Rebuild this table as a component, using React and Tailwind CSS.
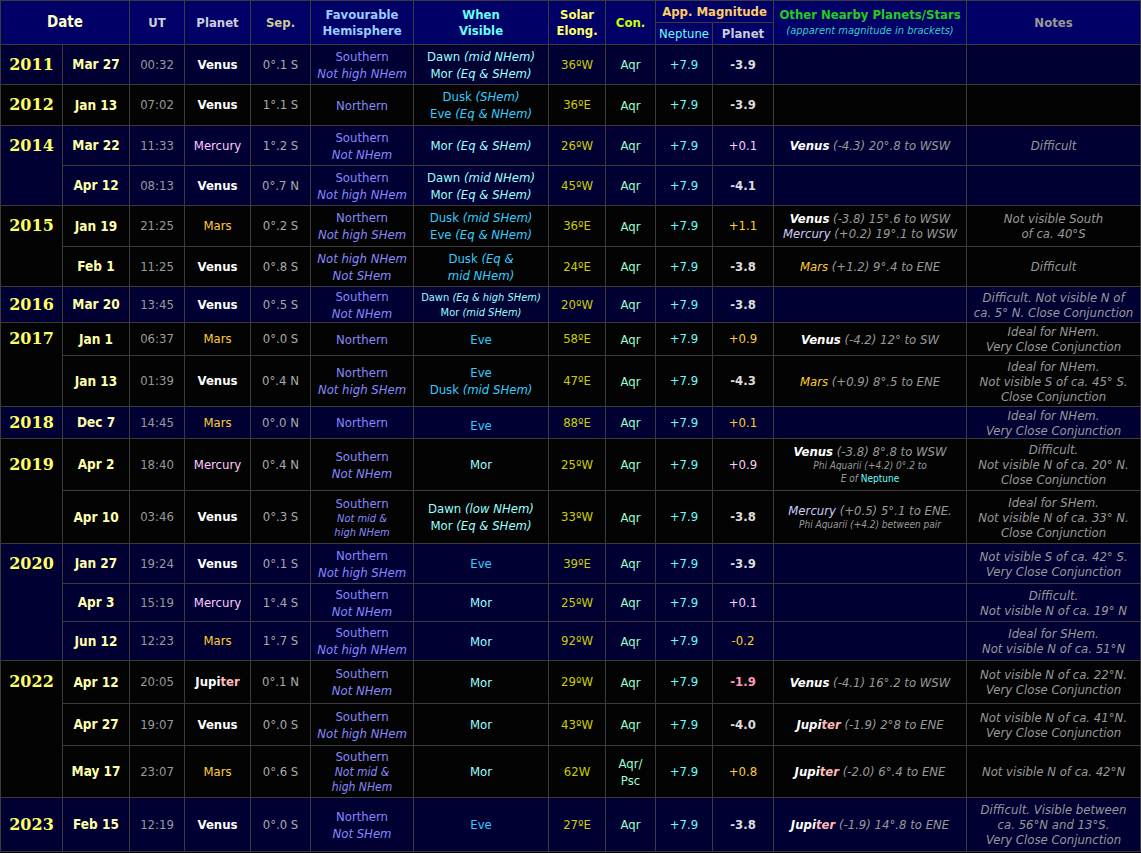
import React from "react";

const F = "font-['DejaVu_Sans_Condensed','Liberation_Sans',sans-serif]";
const C = "border border-[#3b3b3b] text-center align-middle p-0 whitespace-nowrap";
const NAVY = "bg-[#000033]";
const BLACK = "bg-[#030303]";

const PV = () => <span className="font-bold text-white">Venus</span>;
const PM = () => <span className="text-[#ffccff]">Mercury</span>;
const PMa = () => <span className="text-[#ffcc33]">Mars</span>;
const PJ = () => (
  <span className="font-bold text-white">
    Jupi<span className="text-[#ffbbbb]">ter</span>
  </span>
);

const OV = () => <span className="font-bold text-white">Venus</span>;
const OM = () => <span className="text-[#ccccff]">Mercury</span>;
const OMa = () => <span className="text-[#ffcc33]">Mars</span>;
const OJ = () => (
  <span className="font-bold text-white">
    Jupi<span className="text-[#ffbbbb]">ter</span>
  </span>
);

function Hem({ a, b, c, small, mid }) {
  const sub = small ? "text-[11px] leading-[14px]" : mid ? "text-[12px] leading-[15px]" : "";
  return (
    <div className="text-[#8888ff] leading-[17px]">
      {a && <div>{a}</div>}
      {b && <div className={"italic " + sub}>{b}</div>}
      {c && <div className={"italic " + sub}>{c}</div>}
    </div>
  );
}

const Mor = ({ p }) => (
  <div className="text-[#99ffff]">
    Mor{p && <i> ({p})</i>}
  </div>
);
const Dawn = ({ p }) => (
  <div className="text-[#99ffff]">
    Dawn{p && <i> ({p})</i>}
  </div>
);
const Dusk = ({ p }) => (
  <div className="text-[#33ccff]">
    Dusk{p && <i> ({p})</i>}
  </div>
);
const Eve = ({ p }) => (
  <div className="text-[#33ccff]">
    Eve{p && <i> ({p})</i>}
  </div>
);

const MagV = ({ v }) => <span className="font-bold text-[#dddddd]">{v}</span>;
const MagM = ({ v }) => <span className="text-[#ffccff]">{v}</span>;
const MagMa = ({ v }) => <span className="text-[#ffcc33]">{v}</span>;
const MagJ = ({ v }) => <span className="font-bold text-[#ff99bb]">{v}</span>;

function Other({ children }) {
  return <div className="italic text-[#999999] leading-[15px]">{children}</div>;
}
function Notes({ lines }) {
  return (
    <div className="italic text-[#999999] leading-[15px]">
      {lines.map((l, i) => (
        <div key={i}>{l}</div>
      ))}
    </div>
  );
}

function Row({ h, bg, year, yearSpan, yearH, date, ut, planet, sep, hemi, vis, elong, con, mag, other, notes }) {
  return (
    <tr className={h + " " + bg}>
      {year && (
        <td rowSpan={yearSpan || 1} className={C + " align-top"}>
          <div className={yearH + " flex items-center justify-center font-['DejaVu_Serif',serif] font-bold text-[16px] text-[#ffff66]"}>
            {year}
          </div>
        </td>
      )}
      <td className={C + " font-bold text-[#ffffaa] text-[13.5px]"}>{date}</td>
      <td className={C + " text-[#999999]"}>{ut}</td>
      <td className={C}>{planet}</td>
      <td className={C + " text-[#aaaaaa]"}>{sep}</td>
      <td className={C}>{hemi}</td>
      <td className={C + " leading-[17px]"}>{vis}</td>
      <td className={C + " text-[#cccc00]"}>{elong}</td>
      <td className={C + " text-[#99ffcc] leading-[17px]"}>{con}</td>
      <td className={C + " text-[#66ffff]"}>+7.9</td>
      <td className={C}>{mag}</td>
      <td className={C}>{other}</td>
      <td className={C}>{notes}</td>
    </tr>
  );
}

export default function App() {
  return (
    <div className={"bg-black w-[1141px] h-[853px] overflow-hidden " + F + " text-[13px]"}>
      <table className="table-fixed border-collapse w-[1140px]">
        <colgroup>
          <col className="w-[62px]" />
          <col className="w-[67px]" />
          <col className="w-[55px]" />
          <col className="w-[66px]" />
          <col className="w-[60px]" />
          <col className="w-[103px]" />
          <col className="w-[135px]" />
          <col className="w-[57px]" />
          <col className="w-[50px]" />
          <col className="w-[57px]" />
          <col className="w-[61px]" />
          <col className="w-[193px]" />
          <col className="w-[174px]" />
        </colgroup>
        <thead>
          <tr className="h-[22px] bg-[#000066]">
            <th colSpan={2} rowSpan={2} className={C + " font-bold text-[15px] text-[#ffffcc]"}>Date</th>
            <th rowSpan={2} className={C + " font-bold text-[#ccccdd]"}>UT</th>
            <th rowSpan={2} className={C + " font-bold text-[#ccccdd]"}>Planet</th>
            <th rowSpan={2} className={C + " font-bold text-[#cccc99]"}>Sep.</th>
            <th rowSpan={2} className={C + " font-bold text-[#99ccff] leading-[16px]"}>
              Favourable
              <br />
              Hemisphere
            </th>
            <th rowSpan={2} className={C + " font-bold text-[#66ffff] leading-[16px]"}>
              When
              <br />
              Visible
            </th>
            <th rowSpan={2} className={C + " font-bold text-[#ffff66] leading-[16px]"}>
              Solar
              <br />
              Elong.
            </th>
            <th rowSpan={2} className={C + " font-bold text-[#ccff00]"}>Con.</th>
            <th colSpan={2} className={C + " font-bold text-[#ffcc66]"}>App. Magnitude</th>
            <th rowSpan={2} className={C + " leading-[16px]"}>
              <div className="font-bold text-[#22cc22]">Other Nearby Planets/Stars</div>
              <div className="italic font-normal text-[11px] text-[#33cccc]">(apparent magnitude in brackets)</div>
            </th>
            <th rowSpan={2} className={C + " font-bold text-[#999999]"}>Notes</th>
          </tr>
          <tr className="h-[22px] bg-[#000066]">
            <th className={C + " font-normal text-[#66ffff]"}>Neptune</th>
            <th className={C + " font-bold text-[#ccccdd]"}>Planet</th>
          </tr>
        </thead>
        <tbody>
          <Row h="h-[40px]" bg={NAVY} year="2011" yearH="h-[39px]" date="Mar 27" ut="00:32" planet={<PV />} sep="0°.1 S"
            hemi={<Hem a="Southern" b="Not high NHem" />}
            vis={<><Dawn p="mid NHem" /><Mor p="Eq & SHem" /></>}
            elong="36ºW" con="Aqr" mag={<MagV v="-3.9" />} />
          <Row h="h-[41px]" bg={BLACK} year="2012" yearH="h-[40px]" date="Jan 13" ut="07:02" planet={<PV />} sep="1°.1 S"
            hemi={<Hem a="Northern" />}
            vis={<><Dusk p="SHem" /><Eve p="Eq & NHem" /></>}
            elong="36ºE" con="Aqr" mag={<MagV v="-3.9" />} />
          <Row h="h-[40px]" bg={NAVY} year="2014" yearSpan={2} yearH="h-[39px]" date="Mar 22" ut="11:33" planet={<PM />} sep="1°.2 S"
            hemi={<Hem a="Southern" b="Not NHem" />}
            vis={<Mor p="Eq & SHem" />}
            elong="26ºW" con="Aqr" mag={<MagM v="+0.1" />}
            other={<Other><OV /> (-4.3) 20°.8 to WSW</Other>}
            notes={<Notes lines={["Difficult"]} />} />
          <Row h="h-[40px]" bg={NAVY} date="Apr 12" ut="08:13" planet={<PV />} sep="0°.7 N"
            hemi={<Hem a="Southern" b="Not high NHem" />}
            vis={<><Dawn p="mid NHem" /><Mor p="Eq & SHem" /></>}
            elong="45ºW" con="Aqr" mag={<MagV v="-4.1" />} />
          <Row h="h-[41px]" bg={BLACK} year="2015" yearSpan={2} yearH="h-[40px]" date="Jan 19" ut="21:25" planet={<PMa />} sep="0°.2 S"
            hemi={<Hem a="Northern" b="Not high SHem" />}
            vis={<><Dusk p="mid SHem" /><Eve p="Eq & NHem" /></>}
            elong="36ºE" con="Aqr" mag={<MagMa v="+1.1" />}
            other={<Other><div><OV /> (-3.8) 15°.6 to WSW</div><div><OM /> (+0.2) 19°.1 to WSW</div></Other>}
            notes={<Notes lines={["Not visible South", "of ca. 40°S"]} />} />
          <Row h="h-[40px]" bg={BLACK} date="Feb 1" ut="11:25" planet={<PV />} sep="0°.8 S"
            hemi={<Hem b="Not high NHem" c="Not SHem" />}
            vis={<div className="text-[#33ccff]"><div>Dusk <i>(Eq &amp;</i></div><div><i>mid NHem)</i></div></div>}
            elong="24ºE" con="Aqr" mag={<MagV v="-3.8" />}
            other={<Other><OMa /> (+1.2) 9°.4 to ENE</Other>}
            notes={<Notes lines={["Difficult"]} />} />
          <Row h="h-[36px]" bg={NAVY} year="2016" yearH="h-[35px]" date="Mar 20" ut="13:45" planet={<PV />} sep="0°.5 S"
            hemi={<Hem a="Southern" b="Not NHem" />}
            vis={<div className="text-[11px] leading-[15px]"><Dawn p="Eq & high SHem" /><Mor p="mid SHem" /></div>}
            elong="20ºW" con="Aqr" mag={<MagV v="-3.8" />}
            notes={<Notes lines={["Difficult. Not visible N of", "ca. 5° N. Close Conjunction"]} />} />
          <Row h="h-[33px]" bg={BLACK} year="2017" yearSpan={2} yearH="h-[32px]" date="Jan 1" ut="06:37" planet={<PMa />} sep="0°.0 S"
            hemi={<Hem a="Northern" />}
            vis={<Eve />}
            elong="58ºE" con="Aqr" mag={<MagMa v="+0.9" />}
            other={<Other><OV /> (-4.2) 12° to SW</Other>}
            notes={<Notes lines={["Ideal for NHem.", "Very Close Conjunction"]} />} />
          <Row h="h-[51px]" bg={BLACK} date="Jan 13" ut="01:39" planet={<PV />} sep="0°.4 N"
            hemi={<Hem a="Northern" b="Not high SHem" />}
            vis={<><Eve /><Dusk p="mid SHem" /></>}
            elong="47ºE" con="Aqr" mag={<MagV v="-4.3" />}
            other={<Other><OMa /> (+0.9) 8°.5 to ENE</Other>}
            notes={<Notes lines={["Ideal for NHem.", "Not visible S of ca. 45° S.", "Close Conjunction"]} />} />
          <Row h="h-[32px]" bg={NAVY} year="2018" yearH="h-[31px]" date="Dec 7" ut="14:45" planet={<PMa />} sep="0°.0 N"
            hemi={<Hem a="Northern" />}
            vis={<div className="pt-[6px]"><Eve /></div>}
            elong="88ºE" con="Aqr" mag={<MagMa v="+0.1" />}
            notes={<Notes lines={["Ideal for NHem.", "Very Close Conjunction"]} />} />
          <Row h="h-[52px]" bg={BLACK} year="2019" yearSpan={2} yearH="h-[51px]" date="Apr 2" ut="18:40" planet={<PM />} sep="0°.4 N"
            hemi={<Hem a="Southern" b="Not NHem" />}
            vis={<Mor />}
            elong="25ºW" con="Aqr" mag={<MagM v="+0.9" />}
            other={<Other><div><OV /> (-3.8) 8°.8 to WSW</div><div className="text-[10px] leading-[13px]">Phi Aquarii (+4.2) 0°.2 to</div><div className="text-[10px] leading-[13px]">E of <span className="not-italic text-[#66ffff]">Neptune</span></div></Other>}
            notes={<Notes lines={["Difficult.", "Not visible N of ca. 20° N.", "Close Conjunction"]} />} />
          <Row h="h-[53px]" bg={BLACK} date="Apr 10" ut="03:46" planet={<PV />} sep="0°.3 S"
            hemi={<Hem a="Southern" b="Not mid &" c="high NHem" small />}
            vis={<><Dawn p="low NHem" /><Mor p="Eq & SHem" /></>}
            elong="33ºW" con="Aqr" mag={<MagV v="-3.8" />}
            other={<Other><div><OM /> (+0.5) 5°.1 to ENE.</div><div className="text-[10px] leading-[14px]">Phi Aquarii (+4.2) between pair</div></Other>}
            notes={<Notes lines={["Ideal for SHem.", "Not visible N of ca. 33° N.", "Close Conjunction"]} />} />
          <Row h="h-[40px]" bg={NAVY} year="2020" yearSpan={3} yearH="h-[39px]" date="Jan 27" ut="19:24" planet={<PV />} sep="0°.1 S"
            hemi={<Hem a="Northern" b="Not high SHem" />}
            vis={<Eve />}
            elong="39ºE" con="Aqr" mag={<MagV v="-3.9" />}
            notes={<Notes lines={["Not visible S of ca. 42° S.", "Very Close Conjunction"]} />} />
          <Row h="h-[38px]" bg={NAVY} date="Apr 3" ut="15:19" planet={<PM />} sep="1°.4 S"
            hemi={<Hem a="Southern" b="Not NHem" />}
            vis={<Mor />}
            elong="25ºW" con="Aqr" mag={<MagM v="+0.1" />}
            notes={<Notes lines={["Difficult.", "Not visible N of ca. 19° N"]} />} />
          <Row h="h-[39px]" bg={NAVY} date="Jun 12" ut="12:23" planet={<PMa />} sep="1°.7 S"
            hemi={<Hem a="Southern" b="Not high NHem" />}
            vis={<Mor />}
            elong="92ºW" con="Aqr" mag={<MagMa v="-0.2" />}
            notes={<Notes lines={["Ideal for SHem.", "Not visible N of ca. 51°N"]} />} />
          <Row h="h-[43px]" bg={BLACK} year="2022" yearSpan={3} yearH="h-[42px]" date="Apr 12" ut="20:05" planet={<PJ />} sep="0°.1 N"
            hemi={<Hem a="Southern" b="Not NHem" />}
            vis={<Mor />}
            elong="29ºW" con="Aqr" mag={<MagJ v="-1.9" />}
            other={<Other><OV /> (-4.1) 16°.2 to WSW</Other>}
            notes={<Notes lines={["Not visible N of ca. 22°N.", "Very Close Conjunction"]} />} />
          <Row h="h-[42px]" bg={BLACK} date="Apr 27" ut="19:07" planet={<PV />} sep="0°.0 S"
            hemi={<Hem a="Southern" b="Not high NHem" />}
            vis={<Mor />}
            elong="43ºW" con="Aqr" mag={<MagV v="-4.0" />}
            other={<Other><OJ /> (-1.9) 2°8 to ENE</Other>}
            notes={<Notes lines={["Not visible N of ca. 41°N.", "Very Close Conjunction"]} />} />
          <Row h="h-[52px]" bg={BLACK} date="May 17" ut="23:07" planet={<PMa />} sep="0°.6 S"
            hemi={<Hem a="Southern" b="Not mid &" c="high NHem" mid />}
            vis={<Mor />}
            elong="62W" con={<><div>Aqr/</div><div>Psc</div></>} mag={<MagMa v="+0.8" />}
            other={<Other><OJ /> (-2.0) 6°.4 to ENE</Other>}
            notes={<Notes lines={["Not visible N of ca. 42°N"]} />} />
          <Row h="h-[54px]" bg={NAVY} year="2023" yearH="h-[53px]" date="Feb 15" ut="12:19" planet={<PV />} sep="0°.0 S"
            hemi={<Hem a="Northern" b="Not SHem" />}
            vis={<Eve />}
            elong="27ºE" con="Aqr" mag={<MagV v="-3.8" />}
            other={<Other><OJ /> (-1.9) 14°.8 to ENE</Other>}
            notes={<Notes lines={["Difficult. Visible between", "ca. 56°N and 13°S.", "Very Close Conjunction"]} />} />
        </tbody>
      </table>
    </div>
  );
}
